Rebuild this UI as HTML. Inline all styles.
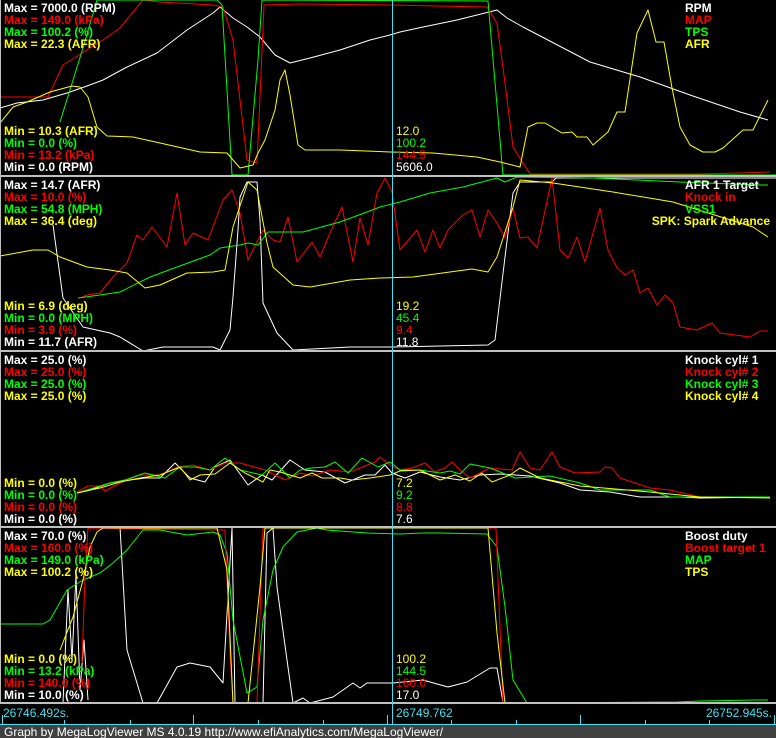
<!DOCTYPE html>
<html><head><meta charset="utf-8"><style>
html,body{margin:0;padding:0;background:#000;width:776px;height:738px;overflow:hidden}
svg{display:block}
text{font-family:"Liberation Sans",Arial,sans-serif;font-size:12px}
.b{font-weight:bold}
</style></head><body>
<svg width="776" height="738" viewBox="0 0 776 738" xmlns="http://www.w3.org/2000/svg">
<rect width="776" height="738" fill="#000"/>
<g fill="none" stroke-width="1" stroke-linejoin="round">
<polyline stroke="#fff" points="0,108 17,103 43,100 67,93 87,86 103,80 127,67 157,53 187,30 213,13 220,7 233,18 247,27 260,37 275,55 290,63 310,58 340,50 370,40 390,35 400,32 423,27 457,20 477,15 497,10 507,18 523,27 590,62 640,77 690,95 740,112 768,120"/>
<polyline stroke="#f00" points="0,97 48,97 63,65 87,50 103,40 120,28 143,0 160,2 213,5 223,7 233,40 247,160 257,163 260,97 264,5 300,4 390,5 487,7 497,23 505,83 513,147 530,174 700,174 740,173 770,172"/>
<polyline stroke="#0f0" points="60,122 83,48 97,0 217,0 222,5 232,175 248,175 258,60 262,0 488,1 503,175 776,175"/>
<polyline stroke="#ff0" points="0,123 13,107 27,102 50,92 72,86 80,87 88,97 97,127 107,136 133,137 160,143 200,152 227,153 240,168 253,165 258,153 265,140 275,110 280,80 285,70 290,95 298,145 305,150 340,150 390,152 433,153 477,157 500,162 520,167 528,127 537,123 545,123 562,133 572,132 577,137 587,137 593,145 608,132 617,112 625,112 637,33 648,10 656,42 664,42 672,88 680,127 690,145 703,152 715,152 723,148 743,130 753,130 768,100"/>
<polyline stroke="#fff" points="53,225 63,298 83,327 110,333 120,337 143,351 163,347 213,347 220,350 230,330 233,297 238,230 240,197 247,182 257,182 260,220 263,303 277,333 293,350 350,347 393,347 488,345 495,340 505,257 513,193 520,182 552,182 556,178 776,178"/>
<polyline stroke="#f00" points="80,298 87,295 100,293 113,277 127,263 137,235 143,240 152,227 167,247 177,193 185,245 193,233 208,240 223,200 232,190 240,213 248,260 263,230 273,240 280,242 288,217 297,262 312,242 320,257 330,233 342,207 353,262 360,218 368,245 377,193 385,178 392,192 400,250 417,230 425,252 433,230 440,248 448,230 463,215 472,210 480,237 488,210 497,223 505,238 513,208 520,238 528,237 537,248 552,178 560,250 568,258 577,237 585,262 600,208 608,250 617,268 625,275 633,270 640,293 648,288 657,305 665,295 673,303 680,327 697,330 712,323 720,333 750,337 760,331 768,331"/>
<polyline stroke="#0f0" points="78,298 100,295 120,292 150,277 177,267 210,255 220,248 240,245 248,243 258,245 268,232 303,232 340,222 367,212 380,207 400,202 430,193 463,187 497,178 505,182 517,177 593,178 680,182 760,185 768,185"/>
<polyline stroke="#ff0" points="0,256 33,250 48,250 60,257 87,267 110,270 127,273 145,288 160,285 187,273 213,272 225,270 233,227 243,197 248,182 257,190 267,243 273,267 293,285 310,287 350,280 380,278 413,277 472,269 488,272 497,257 513,207 520,180 553,183 613,192 673,202 753,227 768,237"/>
<polyline stroke="#fff" points="77,493 90,490 110,483 130,480 145,478 160,478 175,463 190,478 205,482 215,467 230,460 248,485 262,475 272,480 290,460 305,470 325,472 345,483 365,475 375,475 385,465 392,473 405,478 420,472 440,477 460,480 480,475 500,474 530,476 560,483 580,490 610,492 640,497 680,497 700,498 770,497"/>
<polyline stroke="#f00" points="77,492 88,486 100,486 105,491 120,483 140,475 160,475 178,467 193,465 210,470 225,463 240,463 265,470 285,480 300,473 312,476 330,470 350,472 375,462 380,457 390,465 400,470 412,468 425,463 435,472 445,468 452,462 460,470 470,478 490,468 512,470 520,452 530,468 540,470 552,452 560,467 575,473 600,472 605,467 612,468 620,478 650,488 670,490 700,497 770,497"/>
<polyline stroke="#0f0" points="77,493 110,483 125,480 145,473 165,478 180,467 195,467 210,470 225,458 240,470 262,475 275,463 290,478 300,470 312,468 325,467 335,462 348,473 362,458 378,467 390,462 400,470 420,470 440,473 450,471 460,474 470,464 490,468 515,478 550,476 580,483 600,490 650,490 670,497 770,497"/>
<polyline stroke="#ff0" points="77,493 100,488 120,482 140,478 160,475 180,467 190,480 200,475 215,474 230,463 245,473 263,482 270,470 280,472 300,478 312,473 322,478 340,478 352,480 370,478 390,475 400,471 420,470 440,480 455,475 470,481 482,473 492,482 510,475 520,468 540,478 580,486 650,492 700,497 770,498"/>
<polyline stroke="#fff" points="63,703 68,590 72,660 76,575 80,690 84,640 88,700"/>
<polyline stroke="#fff" points="120,527 127,650 143,703 157,703 177,667 190,663 210,667 223,683 232,528 235,703 263,703 267,533 273,528 277,587 287,660 293,703 303,698 310,703 333,697 353,683 360,688 367,683 383,683 393,683 423,680 448,687 467,682 490,668 497,668 503,702"/>
<polyline stroke="#0f0" points="0,624 43,624 50,620 67,590 83,580 100,573 113,563 127,550 143,530 160,530 187,535 213,532 220,535 227,553 233,620 247,693 257,687 263,620 273,570 283,547 297,532 317,528 327,530 367,533 400,534 423,533 440,533 487,534 497,547 505,607 513,680 527,703 677,702 700,701 757,700 768,700"/>
<polyline stroke="#f00" points="82,663 85,577 88,528 225,530 230,653 233,703 257,703 263,528 496,528 503,703"/>
<polyline stroke="#ff0" points="60,650 73,617 83,580 90,547 97,532 103,528 217,528 227,570 233,703 248,703 260,587 265,528 488,528 497,633 505,703 770,703"/>
</g>
<g fill="#c0c0c0">
<rect x="0" y="175" width="776" height="2"/>
<rect x="0" y="350" width="776" height="2"/>
<rect x="0" y="526" width="776" height="2"/>
<rect x="0" y="702" width="776" height="2"/>
<rect x="0" y="0" width="1" height="703"/>
</g>
<rect x="392" y="0" width="1" height="725" fill="#3ee0f0"/>
<g class="b">
<text x="4" y="12" fill="#fff" class="b">Max = 7000.0 (RPM)</text>
<text x="4" y="24" fill="#f00" class="b">Max = 149.0 (kPa)</text>
<text x="4" y="36" fill="#0f0" class="b">Max = 100.2 (%)</text>
<text x="4" y="48" fill="#ff0" class="b">Max = 22.3 (AFR)</text>
<text x="4" y="135" fill="#ff0" class="b">Min = 10.3 (AFR)</text>
<text x="4" y="147" fill="#0f0" class="b">Min = 0.0 (%)</text>
<text x="4" y="159" fill="#f00" class="b">Min = 13.2 (kPa)</text>
<text x="4" y="171" fill="#fff" class="b">Min = 0.0 (RPM)</text>
<text x="685" y="12" fill="#fff" class="b">RPM</text>
<text x="685" y="24" fill="#f00" class="b">MAP</text>
<text x="685" y="36" fill="#0f0" class="b">TPS</text>
<text x="685" y="48" fill="#ff0" class="b">AFR</text>
<text x="4" y="189" fill="#fff" class="b">Max = 14.7 (AFR)</text>
<text x="4" y="201" fill="#f00" class="b">Max = 10.0 (%)</text>
<text x="4" y="213" fill="#0f0" class="b">Max = 54.8 (MPH)</text>
<text x="4" y="225" fill="#ff0" class="b">Max = 36.4 (deg)</text>
<text x="4" y="310" fill="#ff0" class="b">Min = 6.9 (deg)</text>
<text x="4" y="322" fill="#0f0" class="b">Min = 0.0 (MPH)</text>
<text x="4" y="334" fill="#f00" class="b">Min = 3.9 (%)</text>
<text x="4" y="346" fill="#fff" class="b">Min = 11.7 (AFR)</text>
<text x="685" y="189" fill="#fff" class="b">AFR 1 Target</text>
<text x="685" y="201" fill="#f00" class="b">Knock in</text>
<text x="685" y="213" fill="#0f0" class="b">VSS1</text>
<text x="770" y="225" fill="#ff0" class="b" text-anchor="end">SPK: Spark Advance</text>
<text x="4" y="364" fill="#fff" class="b">Max = 25.0 (%)</text>
<text x="4" y="376" fill="#f00" class="b">Max = 25.0 (%)</text>
<text x="4" y="388" fill="#0f0" class="b">Max = 25.0 (%)</text>
<text x="4" y="400" fill="#ff0" class="b">Max = 25.0 (%)</text>
<text x="4" y="487" fill="#ff0" class="b">Min = 0.0 (%)</text>
<text x="4" y="499" fill="#0f0" class="b">Min = 0.0 (%)</text>
<text x="4" y="511" fill="#f00" class="b">Min = 0.0 (%)</text>
<text x="4" y="523" fill="#fff" class="b">Min = 0.0 (%)</text>
<text x="685" y="364" fill="#fff" class="b">Knock cyl# 1</text>
<text x="685" y="376" fill="#f00" class="b">Knock cyl# 2</text>
<text x="685" y="388" fill="#0f0" class="b">Knock cyl# 3</text>
<text x="685" y="400" fill="#ff0" class="b">Knock cyl# 4</text>
<text x="4" y="540" fill="#fff" class="b">Max = 70.0 (%)</text>
<text x="4" y="552" fill="#f00" class="b">Max = 160.0 (%)</text>
<text x="4" y="564" fill="#0f0" class="b">Max = 149.0 (kPa)</text>
<text x="4" y="576" fill="#ff0" class="b">Max = 100.2 (%)</text>
<text x="4" y="663" fill="#ff0" class="b">Min = 0.0 (%)</text>
<text x="4" y="675" fill="#0f0" class="b">Min = 13.2 (kPa)</text>
<text x="4" y="687" fill="#f00" class="b">Min = 140.0 (%)</text>
<text x="4" y="699" fill="#fff" class="b">Min = 10.0 (%)</text>
<text x="685" y="540" fill="#fff" class="b">Boost duty</text>
<text x="685" y="552" fill="#f00" class="b">Boost target 1</text>
<text x="685" y="564" fill="#0f0" class="b">MAP</text>
<text x="685" y="576" fill="#ff0" class="b">TPS</text>
</g>
<text x="396" y="135" fill="#ff0">12.0</text>
<text x="396" y="147" fill="#0f0">100.2</text>
<text x="396" y="159" fill="#f00">144.5</text>
<text x="396" y="171" fill="#fff">5606.0</text>
<text x="396" y="310" fill="#ff0">19.2</text>
<text x="396" y="322" fill="#0f0">45.4</text>
<text x="396" y="334" fill="#f00">9.4</text>
<text x="396" y="346" fill="#fff">11.8</text>
<text x="396" y="487" fill="#ff0">7.2</text>
<text x="396" y="499" fill="#0f0">9.2</text>
<text x="396" y="511" fill="#f00">8.8</text>
<text x="396" y="523" fill="#fff">7.6</text>
<text x="396" y="663" fill="#ff0">100.2</text>
<text x="396" y="675" fill="#0f0">144.5</text>
<text x="396" y="687" fill="#f00">160.0</text>
<text x="396" y="699" fill="#fff">17.0</text>
<g fill="#3ee0f0">
<text x="3" y="717">26746.492s.</text>
<text x="396" y="717">26749.762</text>
<text x="772" y="717" text-anchor="end">26752.945s.</text>
<rect x="0" y="724" width="776" height="1"/>
<rect x="2" y="715" width="1" height="9"/>
<rect x="193" y="715" width="1" height="9"/>
<rect x="387" y="715" width="1" height="9"/>
<rect x="580" y="715" width="1" height="9"/>
<rect x="774" y="715" width="1" height="9"/>
<rect x="64" y="720" width="1" height="4"/>
<rect x="130" y="720" width="1" height="4"/>
<rect x="258" y="720" width="1" height="4"/>
<rect x="323" y="720" width="1" height="4"/>
<rect x="451" y="720" width="1" height="4"/>
<rect x="516" y="720" width="1" height="4"/>
<rect x="645" y="720" width="1" height="4"/>
<rect x="709" y="720" width="1" height="4"/>
</g>
<rect x="0" y="725" width="776" height="13" fill="#404040"/>
<text x="4" y="736" fill="#fff" font-size="12.5">Graph by MegaLogViewer MS 4.0.19 http://www.efiAnalytics.com/MegaLogViewer/</text>
</svg>
</body></html>
